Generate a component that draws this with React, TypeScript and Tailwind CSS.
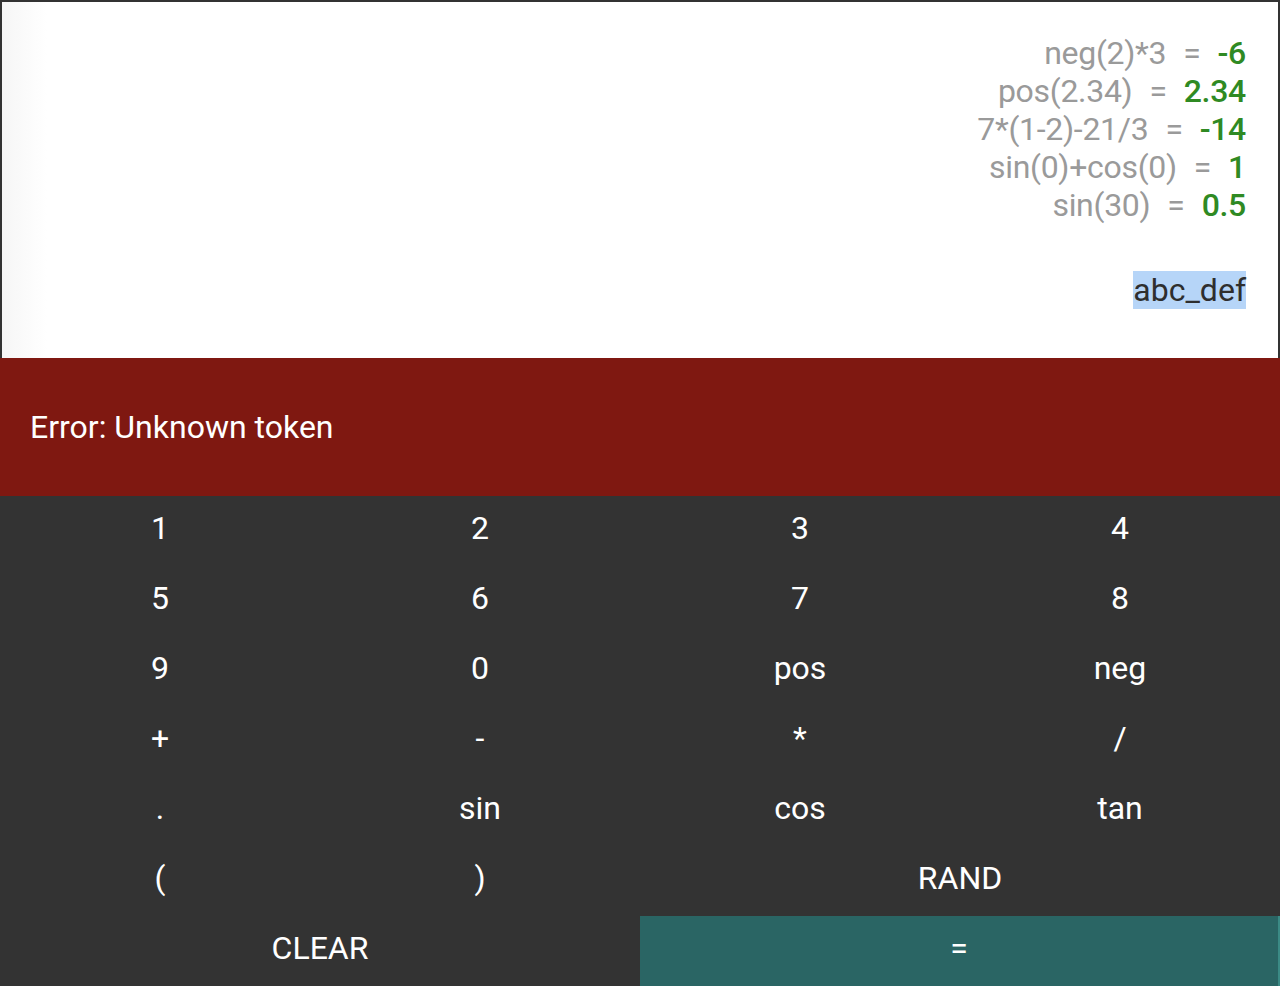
const history = [
  { expr: 'neg(2)*3', result: '-6' },
  { expr: 'pos(2.34)', result: '2.34' },
  { expr: '7*(1-2)-21/3', result: '-14' },
  { expr: 'sin(0)+cos(0)', result: '1' },
  { expr: 'sin(30)', result: '0.5' },
];

const keys: { label: string; wide?: boolean; accent?: boolean }[] = [
  { label: '1' },
  { label: '2' },
  { label: '3' },
  { label: '4' },
  { label: '5' },
  { label: '6' },
  { label: '7' },
  { label: '8' },
  { label: '9' },
  { label: '0' },
  { label: 'pos' },
  { label: 'neg' },
  { label: '+' },
  { label: '-' },
  { label: '*' },
  { label: '/' },
  { label: '.' },
  { label: 'sin' },
  { label: 'cos' },
  { label: 'tan' },
  { label: '(' },
  { label: ')' },
  { label: 'RAND', wide: true },
  { label: 'CLEAR', wide: true },
  { label: '=', wide: true, accent: true },
];

export default function App() {
  return (
    <div className="flex h-[986px] w-[1280px] flex-col bg-[#333333] font-['Roboto',sans-serif]">
      {/* display */}
      <div className="flex h-[358px] flex-col items-end border-[2px] border-b-0 border-[#333333] bg-white bg-[linear-gradient(to_right,#f6f6f6,#ffffff_45px)] px-[32px] pt-[32px]">
        <div className="flex flex-col items-end text-[32px] leading-[38px] tracking-[-0.3px]">
          {history.map((h) => (
            <div key={h.expr} className="flex">
              <span className="text-[#9a9a9a]">{h.expr}</span>
              <span className="mx-[17px] text-[#9a9a9a]">=</span>
              <span className="font-medium text-[#2f8a23]">{h.result}</span>
            </div>
          ))}
        </div>
        <div className="mt-[47px] bg-[#b6d5f8] text-[32px] leading-[38px] text-[#2e2e2e]">
          abc_def
        </div>
      </div>

      {/* error */}
      <div className="flex h-[138px] items-center bg-[#7f1811] px-[30px] text-[32px] text-white">
        Error: Unknown token
      </div>

      {/* keypad */}
      <div className="grid flex-1 grid-cols-4 grid-rows-7">
        {keys.map((k) => (
          <button
            key={k.label}
            className={
              'flex h-[70px] items-center justify-center pb-[6px] text-[32px] text-white ' +
              (k.wide ? 'col-span-2 ' : '') +
              (k.accent ? 'border-r-[2px] border-[#3b8a85] bg-[#2a6564]' : '')
            }
          >
            {k.label}
          </button>
        ))}
      </div>
    </div>
  );
}
